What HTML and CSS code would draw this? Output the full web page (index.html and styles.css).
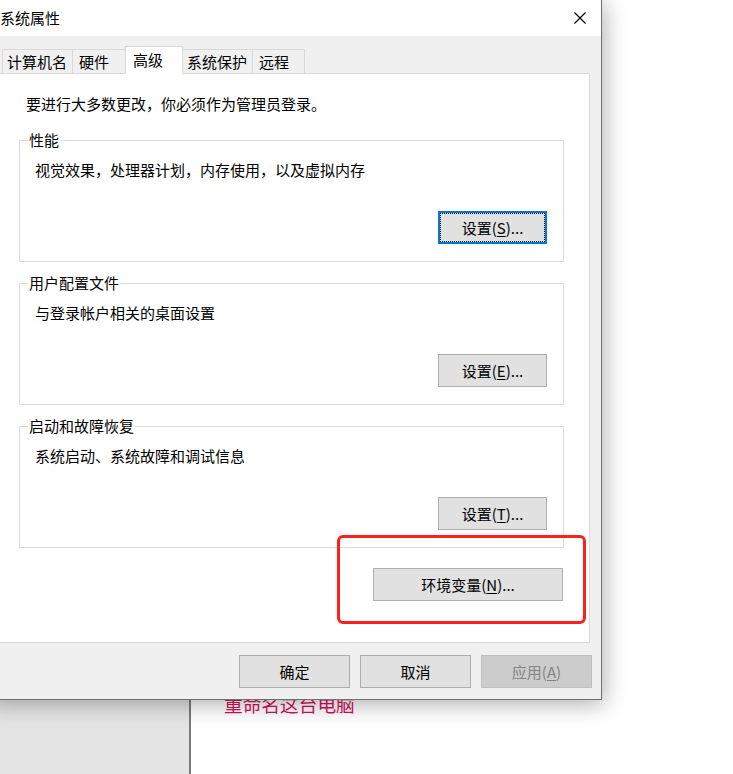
FILE: index.html
```html
<!DOCTYPE html>
<html lang="zh-CN">
<head>
<meta charset="utf-8">
<title>系统属性</title>
<link rel="stylesheet" href="styles.css">
</head>
<body>
<div class="desk">
  <div class="side"></div>
  <div class="main"><div class="rename">重命名这台电脑</div></div>
</div>

<div class="dialog">
  <div class="titlebar">
    <span class="title">系统属性</span>
    <svg class="close" width="12" height="12" viewBox="0 0 12 12"><path d="M0.5 0.5 L11.5 11.5 M11.5 0.5 L0.5 11.5" stroke="#000" stroke-width="1.1" fill="none"/></svg>
  </div>
  <div class="dbody">
    <div class="tabs">
      <div class="tab t1">计算机名</div>
      <div class="tab t2">硬件</div>
      <div class="tab t3 active">高级</div>
      <div class="tab t4">系统保护</div>
      <div class="tab t5">远程</div>
    </div>
    <div class="panel">
      <div class="note">要进行大多数更改，你必须作为管理员登录。</div>

      <fieldset class="group g1">
        <legend>性能</legend>
        <div class="desc">视觉效果，处理器计划，内存使用，以及虚拟内存</div>
        <div class="row"><button class="btn set focus">设置(<u>S</u>)...</button></div>
      </fieldset>

      <fieldset class="group">
        <legend>用户配置文件</legend>
        <div class="desc">与登录帐户相关的桌面设置</div>
        <div class="row"><button class="btn set">设置(<u>E</u>)...</button></div>
      </fieldset>

      <fieldset class="group">
        <legend>启动和故障恢复</legend>
        <div class="desc">系统启动、系统故障和调试信息</div>
        <div class="row"><button class="btn set">设置(<u>T</u>)...</button></div>
      </fieldset>

      <div class="envrow"><button class="btn env">环境变量(<u>N</u>)...</button></div>
    </div>
    <div class="actions">
      <button class="btn act">确定</button>
      <button class="btn act">取消</button>
      <button class="btn act disabled">应用(<u>A</u>)</button>
    </div>
  </div>
</div>

<div class="mark"></div>
</body>
</html>
```

FILE: styles.css
```css
* { box-sizing: border-box; }
html, body { margin: 0; padding: 0; }
body {
  width: 733px;
  height: 774px;
  overflow: hidden;
  position: relative;
  background: #fff;
  font-family: "Noto Sans CJK SC", "Noto Sans", sans-serif;
  font-size: 15px;
  color: #000;
}

.desk { display: flex; height: 774px; }
.side { width: 191px; background: #e5e5e5; border-right: 2px solid #7a7a7a; }
.main { flex: 1; padding: 692px 0 0 33px; }
.rename { font-size: 18.7px; line-height: 24px; color: #d3125c; white-space: nowrap; }

.dialog {
  position: absolute;
  left: -14px;
  top: -1px;
  width: 616px;
  height: 701px;
  border: 1px solid #6f6f6f;
  background: #f0f0f0;
  box-shadow: 2px 4px 22px rgba(0, 0, 0, 0.32);
  display: flex;
  flex-direction: column;
}

.titlebar {
  height: 36px;
  flex: none;
  background: #fff;
  display: flex;
  align-items: center;
  justify-content: space-between;
  padding: 0 15px 0 13px;
}
.title { font-size: 15px; line-height: 20px; }
.close { display: block; }

.dbody { padding: 10px 11px 0 12px; display: flex; flex-direction: column; }

.tabs { display: flex; align-items: flex-end; height: 27px; margin-left: 3px; }
.tab {
  height: 24px;
  border: 1px solid #d9d9d9;
  border-bottom: 0;
  margin-left: -1px;
  display: flex;
  align-items: center;
  justify-content: flex-start;
  font-size: 15px;
  line-height: 20px;
  background: #f0f0f0;
  white-space: nowrap;
}
.t1 { width: 71px; margin-left: 0; padding-left: 4px; }
.t2 { width: 54px; padding-left: 6px; }
.t3 { width: 58px; padding-left: 7px; }
.t4 { width: 71px; padding-left: 4px; }
.t5 { width: 53px; padding-left: 6px; }
.tab.active {
  height: 28px;
  margin-bottom: -1px;
  background: #fff;
  position: relative;
  z-index: 1;
  padding-bottom: 2px;
}

.panel {
  height: 570px;
  background: #fff;
  border: 1px solid #d9d9d9;
  padding: 20px 25px 0 19px;
  display: flex;
  flex-direction: column;
}
.note { line-height: 20px; margin-left: 7px; white-space: nowrap; }

.group {
  margin: 11px 0 0;
  padding: 0;
  border: 1px solid #dcdcdc;
  min-width: 0;
}
.group.g1 { margin-top: 16px; }
.group legend {
  margin-left: 8px;
  padding: 0 1px;
  font-size: 15px;
  line-height: 20px;
}
.desc { margin-top: 10px; padding-left: 15px; line-height: 20px; white-space: nowrap; }
.row { display: flex; justify-content: flex-end; margin-top: 31px; padding: 0 16px 17px 0; }

.btn {
  font-family: inherit;
  font-size: 15px;
  line-height: 20px;
  color: #000;
  background: #e1e1e1;
  border: 1px solid #adadad;
  padding: 0;
  margin: 0;
  display: flex;
  align-items: center;
  justify-content: center;
  white-space: nowrap;
}
.btn u { text-underline-offset: 2px; }
.set { width: 109px; height: 33px; }
.focus { border: 2px solid #0078d7; outline: 1px dotted #000; outline-offset: -3px; }

.envrow { display: flex; justify-content: flex-end; margin-top: 20px; padding-right: 1px; }
.env { width: 190px; height: 33px; }

.actions { display: flex; justify-content: flex-end; gap: 10px; margin-top: 12px; padding-right: 9px; margin-right: -11px; }
.act { width: 111px; height: 33px; }
.act.disabled { background: #cccccc; border-color: #bfbfbf; color: #838383; }

.mark {
  position: absolute;
  left: 337px;
  top: 535px;
  width: 249px;
  height: 89px;
  border: 3px solid #ff1f1f;
  border-radius: 6px;
}
```
